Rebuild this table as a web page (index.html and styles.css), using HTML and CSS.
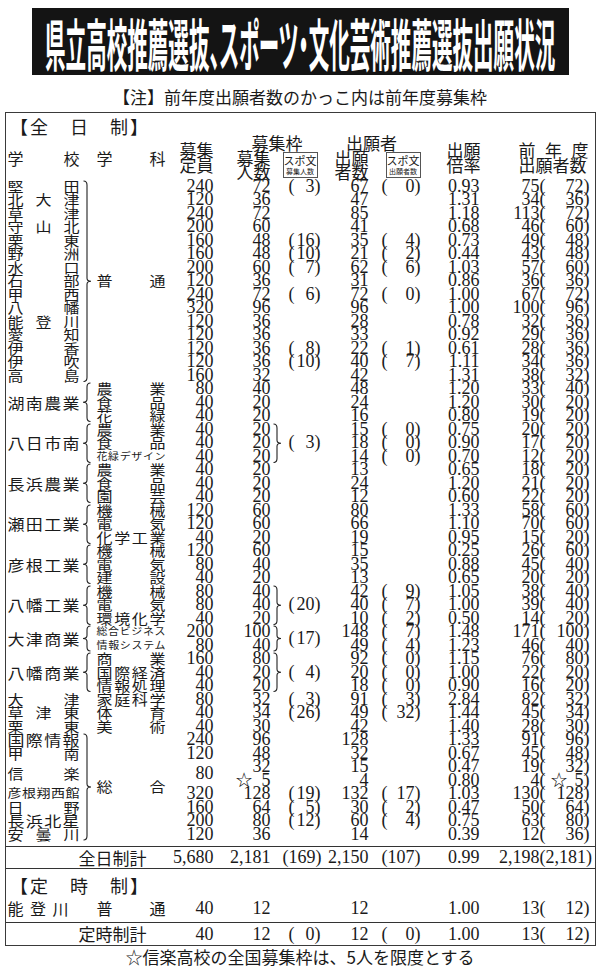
FILE: index.html
```html
<!DOCTYPE html>
<html lang="ja">
<head>
<meta charset="utf-8">
<title>県立高校推薦選抜、スポーツ・文化芸術推薦選抜出願状況</title>
<link rel="stylesheet" href="styles.css">
</head>
<body>
<h1 class="title"><span class="title-text">県立高校推薦選抜、スポーツ・文化芸術推薦選抜出願状況</span></h1>
<p class="note">【注】前年度出願者数のかっこ内は前年度募集枠</p>

<div class="board">
  <div class="sec">【全　日　制】</div>

  <div class="grid head">
    <span class="k1 hall nm">学校</span>
    <span class="k3 hall sb">学科</span>
    <span class="k4 hall hx">募集<br>定員</span>
    <span class="k57 hr1 hc">募集枠</span>
    <span class="k5 hr23 hx">募集<br>人数</span>
    <span class="k7 hr23 hb"><span class="box"><span class="bt">スポ文</span><span class="bs">募集人数</span></span></span>
    <span class="k89 hr1 hc2">出願者</span>
    <span class="k8 hr23 hx">出願<br>者数</span>
    <span class="k9 hr23 hb hb2"><span class="box"><span class="bt">スポ文</span><span class="bs">出願者数</span></span></span>
    <span class="k10 hall hx">出願<br>倍率</span>
    <span class="k1112 hall hp"><span class="hpb"><span class="jus">前年度</span><span>出願者数</span></span></span>
  </div>

  <div class="grid data">
    <!-- 普通 -->
    <span class="nm">堅田</span>
    <span class="br s15"><svg class="brace" width="10" height="202.5" viewBox="0 0 10 202.5"><path d="M1.5,1 Q5,1 5,5 V98.25 Q5,101.25 9,101.25 Q5,101.25 5,104.25 V197.5 Q5,201.5 1.5,201.5"/></svg></span>
    <span class="sb s15">普通</span>
    <span class="d4">240</span><span class="d5">72</span><span class="p7"><i>(</i><i>3)</i></span><span class="d8">67</span><span class="p9"><i>(</i><i>0)</i></span><span class="d10">0.93</span><span class="d11">75(</span><span class="d12">72)</span>

    <span class="nm">北大津</span><span class="d4">120</span><span class="d5">36</span><span class="d8">47</span><span class="d10">1.31</span><span class="d11">34(</span><span class="d12">36)</span>
    <span class="nm">草津</span><span class="d4">240</span><span class="d5">72</span><span class="d8">85</span><span class="d10">1.18</span><span class="d11">113(</span><span class="d12">72)</span>
    <span class="nm">守山北</span><span class="d4">200</span><span class="d5">60</span><span class="d8">41</span><span class="d10">0.68</span><span class="d11">46(</span><span class="d12">60)</span>
    <span class="nm">栗東</span><span class="d4">160</span><span class="d5">48</span><span class="p7"><i>(</i><i>16)</i></span><span class="d8">35</span><span class="p9"><i>(</i><i>4)</i></span><span class="d10">0.73</span><span class="d11">49(</span><span class="d12">48)</span>
    <span class="nm">野洲</span><span class="d4">160</span><span class="d5">48</span><span class="p7"><i>(</i><i>10)</i></span><span class="d8">21</span><span class="p9"><i>(</i><i>2)</i></span><span class="d10">0.44</span><span class="d11">43(</span><span class="d12">48)</span>
    <span class="nm">水口</span><span class="d4">200</span><span class="d5">60</span><span class="p7"><i>(</i><i>7)</i></span><span class="d8">62</span><span class="p9"><i>(</i><i>6)</i></span><span class="d10">1.03</span><span class="d11">57(</span><span class="d12">60)</span>
    <span class="nm">石部</span><span class="d4">120</span><span class="d5">36</span><span class="d8">31</span><span class="d10">0.86</span><span class="d11">36(</span><span class="d12">36)</span>
    <span class="nm">甲西</span><span class="d4">240</span><span class="d5">72</span><span class="p7"><i>(</i><i>6)</i></span><span class="d8">72</span><span class="p9"><i>(</i><i>0)</i></span><span class="d10">1.00</span><span class="d11">67(</span><span class="d12">72)</span>
    <span class="nm">八幡</span><span class="d4">320</span><span class="d5">96</span><span class="d8">96</span><span class="d10">1.00</span><span class="d11">100(</span><span class="d12">96)</span>
    <span class="nm">能登川</span><span class="d4">120</span><span class="d5">36</span><span class="d8">28</span><span class="d10">0.78</span><span class="d11">32(</span><span class="d12">36)</span>
    <span class="nm">愛知</span><span class="d4">120</span><span class="d5">36</span><span class="d8">33</span><span class="d10">0.92</span><span class="d11">29(</span><span class="d12">36)</span>
    <span class="nm">伊香</span><span class="d4">120</span><span class="d5">36</span><span class="p7"><i>(</i><i>8)</i></span><span class="d8">22</span><span class="p9"><i>(</i><i>1)</i></span><span class="d10">0.61</span><span class="d11">28(</span><span class="d12">36)</span>
    <span class="nm">伊吹</span><span class="d4">120</span><span class="d5">36</span><span class="p7"><i>(</i><i>10)</i></span><span class="d8">40</span><span class="p9"><i>(</i><i>7)</i></span><span class="d10">1.11</span><span class="d11">34(</span><span class="d12">36)</span>
    <span class="nm">高島</span><span class="d4">160</span><span class="d5">32</span><span class="d8">42</span><span class="d10">1.31</span><span class="d11">38(</span><span class="d12">32)</span>

    <!-- 湖南農業 -->
    <span class="nm g s3">湖南農業</span>
    <span class="br s3"><svg class="brace" width="10" height="40.5" viewBox="0 0 10 40.5"><path d="M8.5,1 Q5,1 5,5 V17.25 Q5,20.25 1,20.25 Q5,20.25 5,23.25 V35.5 Q5,39.5 8.5,39.5"/></svg></span>
    <span class="sb">農業</span><span class="d4">80</span><span class="d5">40</span><span class="d8">48</span><span class="d10">1.20</span><span class="d11">33(</span><span class="d12">40)</span>
    <span class="sb">食品</span><span class="d4">40</span><span class="d5">20</span><span class="d8">24</span><span class="d10">1.20</span><span class="d11">30(</span><span class="d12">20)</span>
    <span class="sb">花緑</span><span class="d4">40</span><span class="d5">20</span><span class="d8">16</span><span class="d10">0.80</span><span class="d11">19(</span><span class="d12">20)</span>

    <!-- 八日市南 -->
    <span class="nm g s3">八日市南</span>
    <span class="br s3"><svg class="brace" width="10" height="40.5" viewBox="0 0 10 40.5"><path d="M8.5,1 Q5,1 5,5 V17.25 Q5,20.25 1,20.25 Q5,20.25 5,23.25 V35.5 Q5,39.5 8.5,39.5"/></svg></span>
    <span class="sb">農業</span><span class="d4">40</span><span class="d5">20</span>
    <span class="b6 s3"><svg class="brace" width="10" height="40.5" viewBox="0 0 10 40.5"><path d="M1.5,1 Q5,1 5,5 V17.25 Q5,20.25 9,20.25 Q5,20.25 5,23.25 V35.5 Q5,39.5 1.5,39.5"/></svg></span>
    <span class="p7 s3"><i>(</i><i>3)</i></span>
    <span class="d8">15</span><span class="p9"><i>(</i><i>0)</i></span><span class="d10">0.75</span><span class="d11">20(</span><span class="d12">20)</span>
    <span class="sb">食品</span><span class="d4">40</span><span class="d5">20</span><span class="d8">18</span><span class="p9"><i>(</i><i>0)</i></span><span class="d10">0.90</span><span class="d11">17(</span><span class="d12">20)</span>
    <span class="sb sm">花緑デザイン</span><span class="d4">40</span><span class="d5">20</span><span class="d8">14</span><span class="p9"><i>(</i><i>0)</i></span><span class="d10">0.70</span><span class="d11">12(</span><span class="d12">20)</span>

    <!-- 長浜農業 -->
    <span class="nm g s3">長浜農業</span>
    <span class="br s3"><svg class="brace" width="10" height="40.5" viewBox="0 0 10 40.5"><path d="M8.5,1 Q5,1 5,5 V17.25 Q5,20.25 1,20.25 Q5,20.25 5,23.25 V35.5 Q5,39.5 8.5,39.5"/></svg></span>
    <span class="sb">農業</span><span class="d4">40</span><span class="d5">20</span><span class="d8">13</span><span class="d10">0.65</span><span class="d11">18(</span><span class="d12">20)</span>
    <span class="sb">食品</span><span class="d4">40</span><span class="d5">20</span><span class="d8">24</span><span class="d10">1.20</span><span class="d11">21(</span><span class="d12">20)</span>
    <span class="sb">園芸</span><span class="d4">40</span><span class="d5">20</span><span class="d8">12</span><span class="d10">0.60</span><span class="d11">22(</span><span class="d12">20)</span>

    <!-- 瀬田工業 -->
    <span class="nm g s3">瀬田工業</span>
    <span class="br s3"><svg class="brace" width="10" height="40.5" viewBox="0 0 10 40.5"><path d="M8.5,1 Q5,1 5,5 V17.25 Q5,20.25 1,20.25 Q5,20.25 5,23.25 V35.5 Q5,39.5 8.5,39.5"/></svg></span>
    <span class="sb">機械</span><span class="d4">120</span><span class="d5">60</span><span class="d8">80</span><span class="d10">1.33</span><span class="d11">58(</span><span class="d12">60)</span>
    <span class="sb">電気</span><span class="d4">120</span><span class="d5">60</span><span class="d8">66</span><span class="d10">1.10</span><span class="d11">70(</span><span class="d12">60)</span>
    <span class="sb">化学工業</span><span class="d4">40</span><span class="d5">20</span><span class="d8">19</span><span class="d10">0.95</span><span class="d11">15(</span><span class="d12">20)</span>

    <!-- 彦根工業 -->
    <span class="nm g s3">彦根工業</span>
    <span class="br s3"><svg class="brace" width="10" height="40.5" viewBox="0 0 10 40.5"><path d="M8.5,1 Q5,1 5,5 V17.25 Q5,20.25 1,20.25 Q5,20.25 5,23.25 V35.5 Q5,39.5 8.5,39.5"/></svg></span>
    <span class="sb">機械</span><span class="d4">120</span><span class="d5">60</span><span class="d8">15</span><span class="d10">0.25</span><span class="d11">26(</span><span class="d12">60)</span>
    <span class="sb">電気</span><span class="d4">80</span><span class="d5">40</span><span class="d8">35</span><span class="d10">0.88</span><span class="d11">45(</span><span class="d12">40)</span>
    <span class="sb">建設</span><span class="d4">40</span><span class="d5">20</span><span class="d8">13</span><span class="d10">0.65</span><span class="d11">20(</span><span class="d12">20)</span>

    <!-- 八幡工業 -->
    <span class="nm g s3">八幡工業</span>
    <span class="br s3"><svg class="brace" width="10" height="40.5" viewBox="0 0 10 40.5"><path d="M8.5,1 Q5,1 5,5 V17.25 Q5,20.25 1,20.25 Q5,20.25 5,23.25 V35.5 Q5,39.5 8.5,39.5"/></svg></span>
    <span class="sb">機械</span><span class="d4">80</span><span class="d5">40</span>
    <span class="b6 s3"><svg class="brace" width="10" height="40.5" viewBox="0 0 10 40.5"><path d="M1.5,1 Q5,1 5,5 V17.25 Q5,20.25 9,20.25 Q5,20.25 5,23.25 V35.5 Q5,39.5 1.5,39.5"/></svg></span>
    <span class="p7 s3"><i>(</i><i>20)</i></span>
    <span class="d8">42</span><span class="p9"><i>(</i><i>9)</i></span><span class="d10">1.05</span><span class="d11">38(</span><span class="d12">40)</span>
    <span class="sb">電気</span><span class="d4">80</span><span class="d5">40</span><span class="d8">40</span><span class="p9"><i>(</i><i>7)</i></span><span class="d10">1.00</span><span class="d11">39(</span><span class="d12">40)</span>
    <span class="sb">環境化学</span><span class="d4">40</span><span class="d5">20</span><span class="d8">10</span><span class="p9"><i>(</i><i>2)</i></span><span class="d10">0.50</span><span class="d11">14(</span><span class="d12">20)</span>

    <!-- 大津商業 -->
    <span class="nm g s2">大津商業</span>
    <span class="br s2"><svg class="brace" width="10" height="27" viewBox="0 0 10 27"><path d="M8.5,1 Q5,1 5,5 V10.5 Q5,13.5 1,13.5 Q5,13.5 5,16.5 V22 Q5,26 8.5,26"/></svg></span>
    <span class="sb sm">総合ビジネス</span><span class="d4">200</span><span class="d5">100</span>
    <span class="b6 s2"><svg class="brace" width="10" height="27" viewBox="0 0 10 27"><path d="M1.5,1 Q5,1 5,5 V10.5 Q5,13.5 9,13.5 Q5,13.5 5,16.5 V22 Q5,26 1.5,26"/></svg></span>
    <span class="p7 s2"><i>(</i><i>17)</i></span>
    <span class="d8">148</span><span class="p9"><i>(</i><i>7)</i></span><span class="d10">1.48</span><span class="d11">171(</span><span class="d12">100)</span>
    <span class="sb sm">情報システム</span><span class="d4">80</span><span class="d5">40</span><span class="d8">49</span><span class="p9"><i>(</i><i>4)</i></span><span class="d10">1.23</span><span class="d11">46(</span><span class="d12">40)</span>

    <!-- 八幡商業 -->
    <span class="nm g s3">八幡商業</span>
    <span class="br s3"><svg class="brace" width="10" height="40.5" viewBox="0 0 10 40.5"><path d="M8.5,1 Q5,1 5,5 V17.25 Q5,20.25 1,20.25 Q5,20.25 5,23.25 V35.5 Q5,39.5 8.5,39.5"/></svg></span>
    <span class="sb">商業</span><span class="d4">160</span><span class="d5">80</span>
    <span class="b6 s3"><svg class="brace" width="10" height="40.5" viewBox="0 0 10 40.5"><path d="M1.5,1 Q5,1 5,5 V17.25 Q5,20.25 9,20.25 Q5,20.25 5,23.25 V35.5 Q5,39.5 1.5,39.5"/></svg></span>
    <span class="p7 s3"><i>(</i><i>4)</i></span>
    <span class="d8">92</span><span class="p9"><i>(</i><i>0)</i></span><span class="d10">1.15</span><span class="d11">76(</span><span class="d12">80)</span>
    <span class="sb">国際経済</span><span class="d4">40</span><span class="d5">20</span><span class="d8">20</span><span class="p9"><i>(</i><i>0)</i></span><span class="d10">1.00</span><span class="d11">22(</span><span class="d12">20)</span>
    <span class="sb">情報処理</span><span class="d4">40</span><span class="d5">20</span><span class="d8">18</span><span class="p9"><i>(</i><i>0)</i></span><span class="d10">0.90</span><span class="d11">16(</span><span class="d12">20)</span>

    <!-- 単独学科 -->
    <span class="nm">大津</span><span class="sb">家庭科学</span><span class="d4">80</span><span class="d5">32</span><span class="p7"><i>(</i><i>3)</i></span><span class="d8">91</span><span class="p9"><i>(</i><i>3)</i></span><span class="d10">2.84</span><span class="d11">82(</span><span class="d12">32)</span>
    <span class="nm">草津東</span><span class="sb">体育</span><span class="d4">40</span><span class="d5">34</span><span class="p7"><i>(</i><i>26)</i></span><span class="d8">49</span><span class="p9"><i>(</i><i>32)</i></span><span class="d10">1.44</span><span class="d11">45(</span><span class="d12">34)</span>
    <span class="nm">栗東</span><span class="sb">美術</span><span class="d4">40</span><span class="d5">30</span><span class="d8">42</span><span class="d10">1.40</span><span class="d11">28(</span><span class="d12">30)</span>

    <!-- 総合 -->
    <span class="nm t">国際情報</span>
    <span class="br s8"><svg class="brace" width="10" height="108" viewBox="0 0 10 108"><path d="M1.5,1 Q5,1 5,5 V51 Q5,54 9,54 Q5,54 5,57 V103 Q5,107 1.5,107"/></svg></span>
    <span class="sb s8">総合</span>
    <span class="d4">240</span><span class="d5">96</span><span class="d8">128</span><span class="d10">1.33</span><span class="d11">91(</span><span class="d12">96)</span>
    <span class="nm">甲南</span><span class="d4">120</span><span class="d5">48</span><span class="d8">32</span><span class="d10">0.67</span><span class="d11">45(</span><span class="d12">48)</span>
    <span class="nm s2">信楽</span><span class="d4 s2">80</span><span class="d5">32</span><span class="d8">15</span><span class="d10">0.47</span><span class="d11">19(</span><span class="d12">32)</span>
    <span class="d5">☆&nbsp;&nbsp;5</span><span class="d8">4</span><span class="d10">0.80</span><span class="d11">4(</span><span class="d12 star"><i>☆</i><i>5)</i></span>
    <span class="nm xs">彦根翔西館</span><span class="d4">320</span><span class="d5">128</span><span class="p7"><i>(</i><i>19)</i></span><span class="d8">132</span><span class="p9"><i>(</i><i>17)</i></span><span class="d10">1.03</span><span class="d11">130(</span><span class="d12">128)</span>
    <span class="nm">日野</span><span class="d4">160</span><span class="d5">64</span><span class="p7"><i>(</i><i>5)</i></span><span class="d8">30</span><span class="p9"><i>(</i><i>2)</i></span><span class="d10">0.47</span><span class="d11">50(</span><span class="d12">64)</span>
    <span class="nm t">長浜北星</span><span class="d4">200</span><span class="d5">80</span><span class="p7"><i>(</i><i>12)</i></span><span class="d8">60</span><span class="p9"><i>(</i><i>4)</i></span><span class="d10">0.75</span><span class="d11">63(</span><span class="d12">80)</span>
    <span class="nm">安曇川</span><span class="d4">120</span><span class="d5">36</span><span class="d8">14</span><span class="d10">0.39</span><span class="d11">12(</span><span class="d12">36)</span>
  </div>

  <div class="grid tot tot-full">
    <span class="k13 totl">全日制計</span><span class="d4">5,680</span><span class="d5">2,181</span><span class="p7"><i>(</i><i>169)</i></span><span class="d8">2,150</span><span class="p9"><i>(</i><i>107)</i></span><span class="d10">0.99</span><span class="d11">2,198(</span><span class="d12">2,181)</span>
  </div>

  <div class="sec sec2">【定　時　制】</div>

  <div class="grid part">
    <span class="nm short">能登川</span><span class="sb">普通</span><span class="d4">40</span><span class="d5">12</span><span class="d8">12</span><span class="d10">1.00</span><span class="d11">13(</span><span class="d12">12)</span>
  </div>

  <div class="grid tot tot-part">
    <span class="k13 totl">定時制計</span><span class="d4">40</span><span class="d5">12</span><span class="p7"><i>(</i><i>0)</i></span><span class="d8">12</span><span class="p9"><i>(</i><i>0)</i></span><span class="d10">1.00</span><span class="d11">13(</span><span class="d12">12)</span>
  </div>
</div>

<p class="foot">☆信楽高校の全国募集枠は、5人を限度とする</p>
</body>
</html>
```

FILE: styles.css
```css
* { box-sizing: border-box; }

body {
  margin: 0;
  width: 600px;
  background: #fff;
  color: #1a1a1a;
  font-family: "Noto Sans CJK JP", "Noto Sans", sans-serif;
}

/* title */
.title {
  width: 537px;
  height: 67px;
  margin: 8px auto 0;
  background: #141414;
  display: flex;
  align-items: center;
  justify-content: center;
}
.title-text {
  flex: none;
  white-space: nowrap;
  color: #fff;
  font-weight: 700;
  font-size: 56px;
  line-height: 1;
  font-feature-settings: "palt";
  transform: scaleX(0.367);
}

.note {
  margin: 12px 0 0;
  text-align: center;
  font-size: 17px;
  line-height: 20px;
}

/* board */
.board {
  margin: 5px 4px 0 5px;
  border: 1.5px solid #3a3a3a;
}

.sec {
  height: 23px;
  padding: 3px 0 0 4px;
  font-size: 18px;
  line-height: 20px;
  letter-spacing: 2px;
}
.sec2 {
  height: 26px;
  padding-top: 6px;
}

.grid {
  display: grid;
  grid-template-columns: 72px 13px 75px 46px 57px 11px 39px 48px 54px 58px 65px 44px;
  padding-left: 1.5px;
}

/* header */
.head {
  grid-template-rows: repeat(3, 14.5px);
  font-size: 17px;
  line-height: 14.5px;
}
.k1 { grid-column: 1; }
.k3 { grid-column: 3; }
.k4 { grid-column: 4; }
.k5 { grid-column: 5; }
.k7 { grid-column: 7; }
.k8 { grid-column: 8; }
.k9 { grid-column: 9; }
.k10 { grid-column: 10; }
.k57 { grid-column: 5 / 8; }
.k89 { grid-column: 8 / 10; }
.k1112 { grid-column: 11 / 13; }
.k13 { grid-column: 1 / 4; }
.hall { grid-row: 1 / 4; align-self: center; }
.hr1 { grid-row: 1; }
.hr23 { grid-row: 2 / 4; align-self: center; }
.hx { text-align: right; }
.hc { text-align: center; padding-left: 20px; }
.hc2 { text-align: center; }
.hb {
  display: flex;
  align-items: center;
  padding-left: 1px;
}
.hb2 { justify-content: flex-end; padding-right: 2px; }
.box {
  width: 35px;
  height: 26px;
  border: 1px solid #555;
  display: flex;
  flex-direction: column;
  align-items: center;
  justify-content: center;
  line-height: 1;
}
.bt { font-size: 11px; }
.bs { font-size: 7px; margin-top: 2px; }
.hp { display: flex; justify-content: flex-end; padding-right: 1px; }
.hpb { display: flex; flex-direction: column; width: 70px; }
.jus { text-align: justify; text-align-last: justify; }

/* data */
.data {
  grid-auto-rows: 13.5px;
  line-height: 13.5px;
}

.nm {
  grid-column: 1;
  font-size: 16px;
  text-align: justify;
  text-align-last: justify;
}
.nm.g, .nm.t { font-size: 17px; }
.nm.xs { font-size: 14px; }
.nm.short { padding-right: 11px; }

.sb {
  grid-column: 3;
  font-size: 16px;
  padding: 0 2px 0 4px;
  text-align: justify;
  text-align-last: justify;
}
.sb.sm { font-size: 11px; }

/* flattened (平体) newspaper-style glyphs */
.data .nm, .data .sb {
  transform: scaleY(0.88);
}

.br { grid-column: 2; display: flex; align-items: center; padding-left: 2px; }
.b6 { grid-column: 6; display: flex; align-items: center; padding-left: 1px; }
.brace { display: block; }
.brace path { fill: none; stroke: #222; stroke-width: 1.1; }

.s2 { grid-row: span 2; align-self: center; }
.s3 { grid-row: span 3; align-self: center; }
.s8 { grid-row: span 8; align-self: center; }
.s15 { grid-row: span 15; align-self: center; }

.d4, .d5, .d8, .d10, .d11, .d12, .p7, .p9 {
  font-family: "Liberation Serif", serif;
  font-size: 18px;
}
.d4, .d5, .d8, .d10, .d11, .d12 { text-align: right; }
.d4 { grid-column: 4; }
.d5 { grid-column: 5; }
.d8 { grid-column: 8; }
.d10 { grid-column: 10; padding-right: 1px; }
.d11 { grid-column: 11; }
.d12 { grid-column: 12; }

.p7, .p9, .star {
  display: flex;
  justify-content: space-between;
}
.p7 { grid-column: 7; padding-left: 7px; }
.p9 { grid-column: 9; padding: 0 2px 0 13px; }
.star { padding-left: 4px; }
.p7 i, .p9 i, .star i { font-style: normal; }

/* totals */
.tot {
  line-height: 21px;
}
.tot .p7 { padding-left: 1px; }
.tot-full {
  margin-top: 5px;
  border-top: 1px solid #333;
  border-bottom: 1px solid #333;
}
.tot-part {
  line-height: 22px;
  border-top: 1px solid #333;
}
.tot-part .p7 { padding-left: 7px; }
.totl {
  font-size: 17px;
  text-align: right;
  padding-right: 21px;
}

.part {
  grid-auto-rows: 27px;
  line-height: 27px;
}

.foot {
  margin: 1px 0 0;
  text-align: center;
  font-size: 17px;
  line-height: 20px;
}
```
